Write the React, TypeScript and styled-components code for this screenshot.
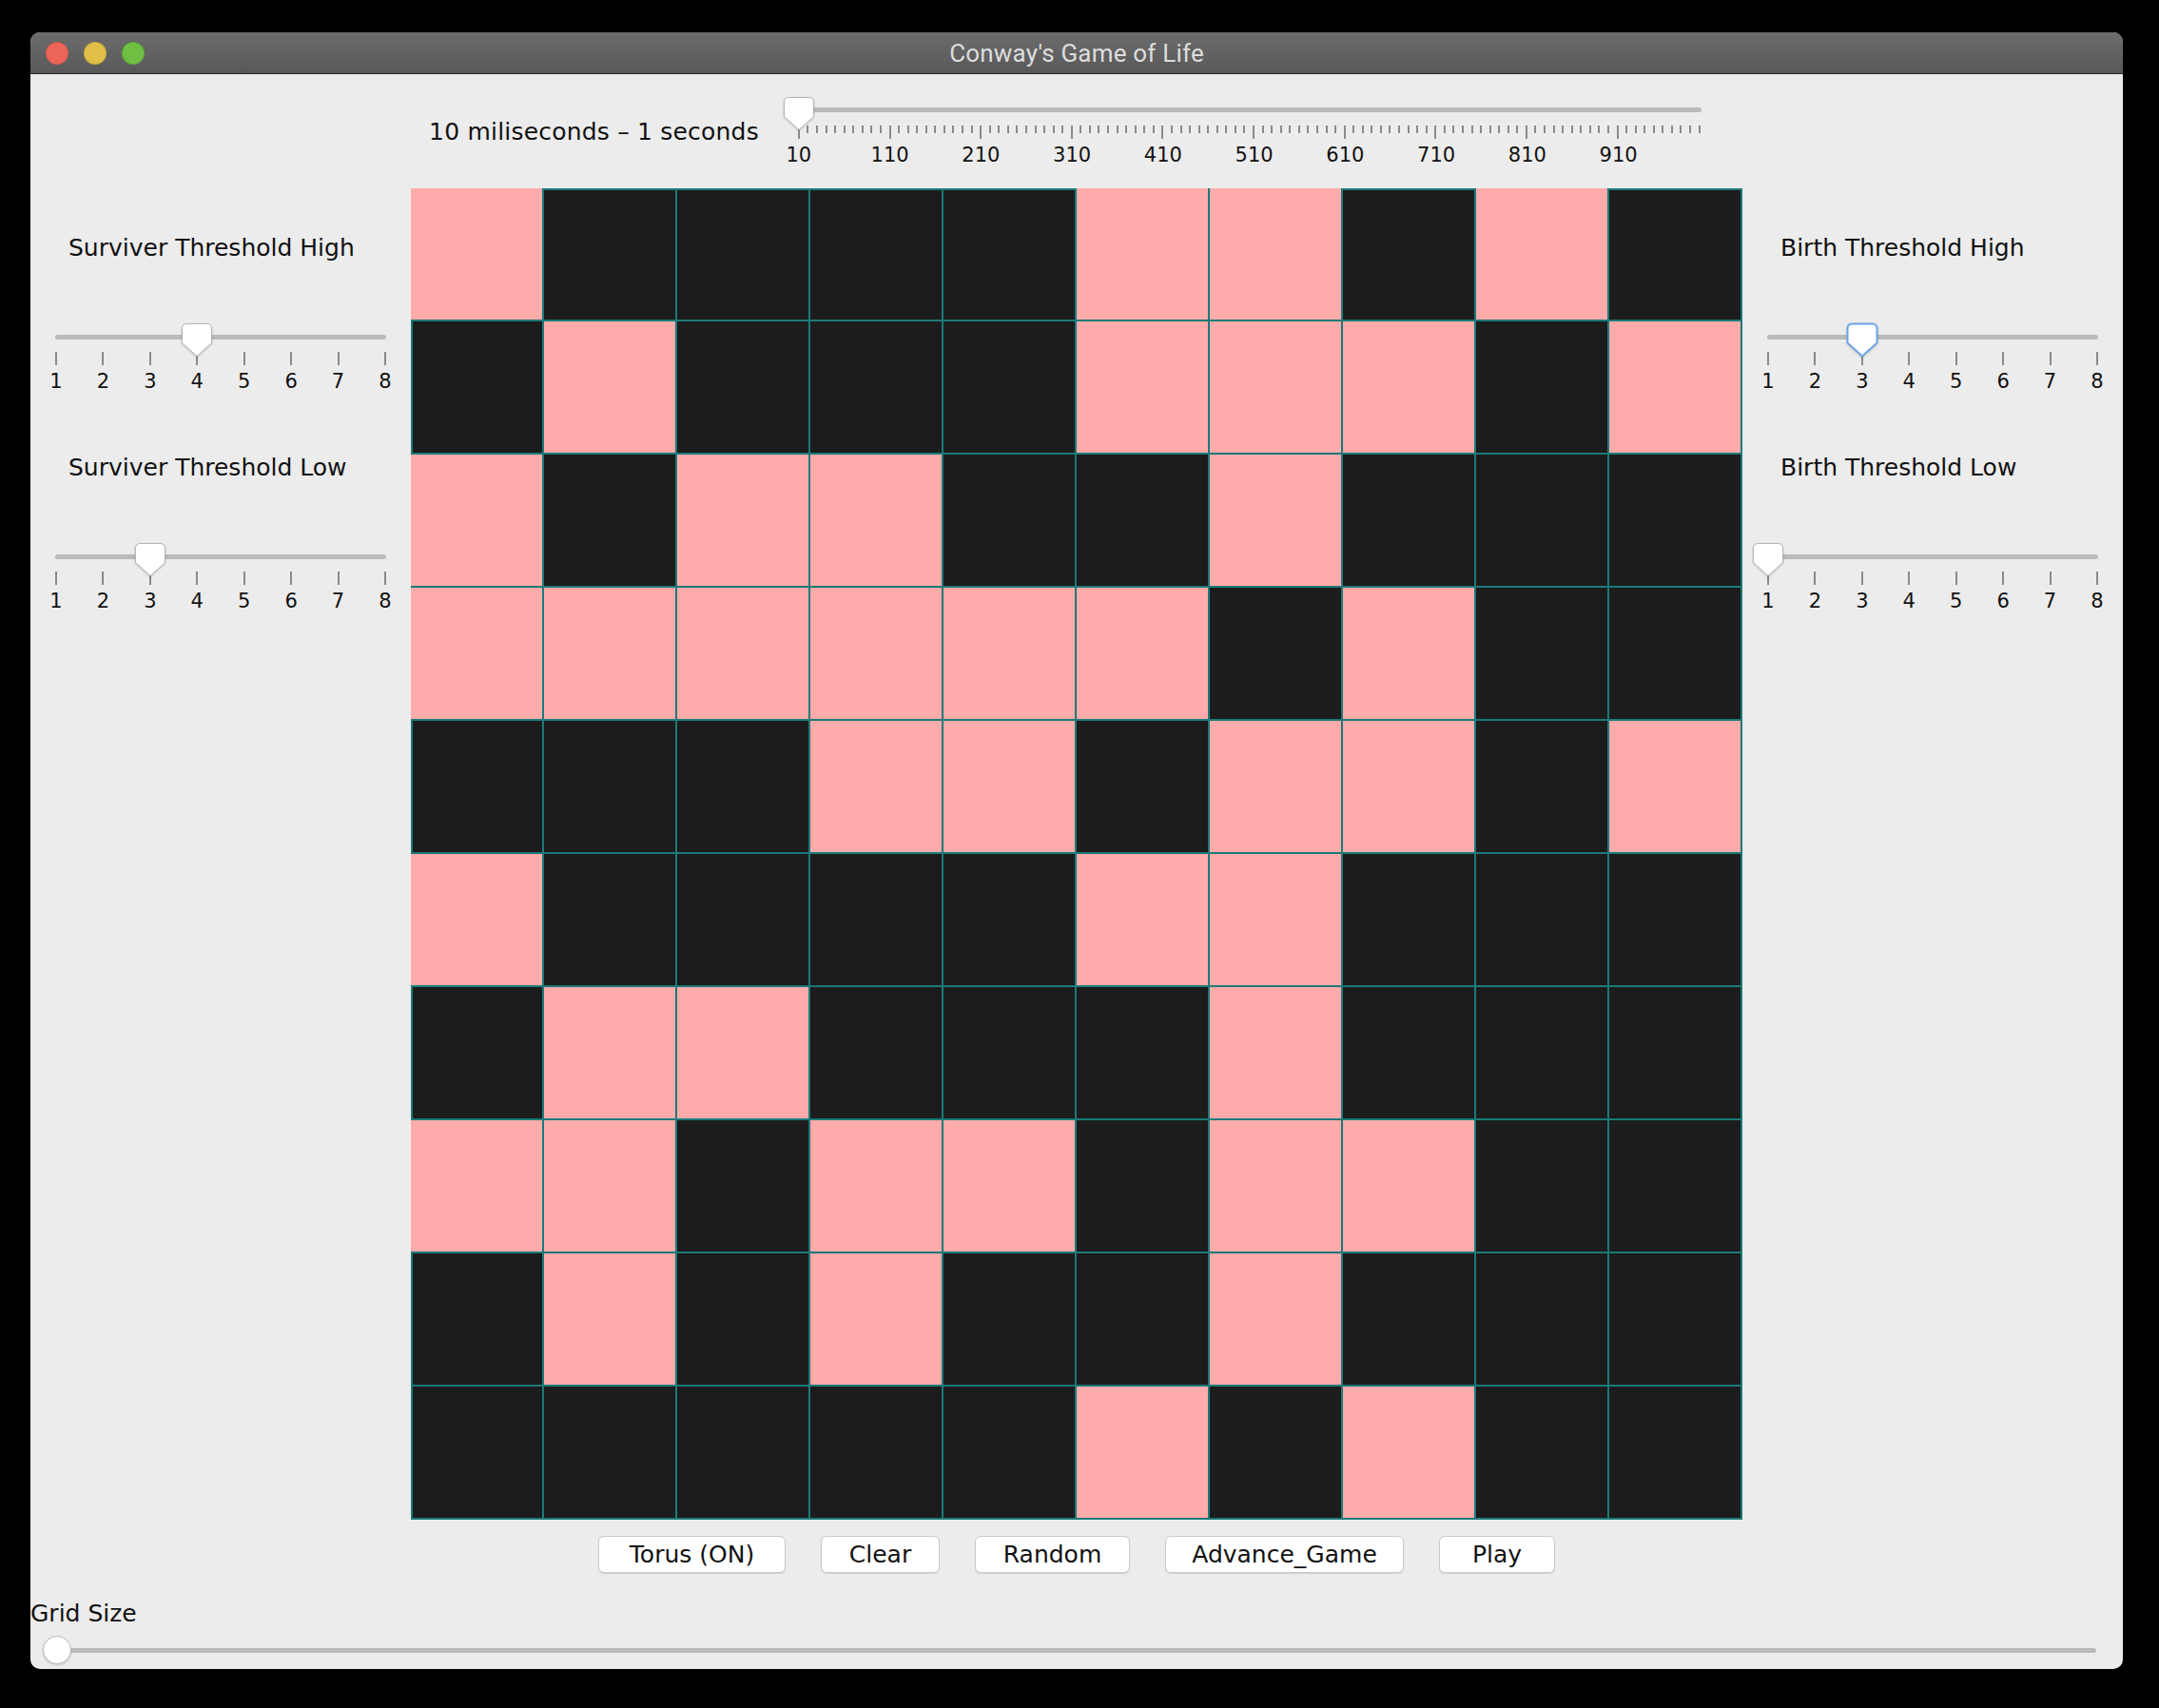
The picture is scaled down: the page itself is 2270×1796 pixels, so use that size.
import React from "react";
import styled, { createGlobalStyle } from "styled-components";

const GlobalStyle = createGlobalStyle`
  html, body { margin: 0; padding: 0; background: #000; }
  body {
    width: 2270px;
    height: 1796px;
    overflow: hidden;
    font-family: "DejaVu Sans", "Liberation Sans", sans-serif;
    color: #111;
  }
`;

const TEAL = "#1b7a78";

const Screen = styled.div`
  padding: 34px 0 0 32px;
`;

const Window = styled.div`
  width: 2200px;
  height: 1721px;
  background: #ececec;
  border-radius: 10px;
  overflow: hidden;
  display: flex;
  flex-direction: column;
`;

const TitleBar = styled.div`
  height: 43px;
  flex: none;
  border-bottom: 1px solid #2b2b2b;
  background: linear-gradient(#6d6d6d, #585858);
  display: grid;
  grid-template-columns: 1fr auto 1fr;
  align-items: center;
  padding: 0 16px;
`;

const Lights = styled.div`
  display: flex;
  gap: 16px;
`;

const Light = styled.span<{ $color: string }>`
  width: 24px;
  height: 24px;
  border-radius: 50%;
  background: ${(p) => p.$color};
  box-shadow: inset 0 0 0 1px rgba(0, 0, 0, 0.12);
`;

const Title = styled.div`
  font-family: Roboto, "Liberation Sans", sans-serif;
  font-size: 26px;
  color: #dddddd;
  letter-spacing: 0.2px;
`;

const Content = styled.div`
  flex: 1;
  display: flex;
  flex-direction: column;
`;

const TopBar = styled.div`
  height: 120px;
  display: flex;
  justify-content: center;
  align-items: center;
  gap: 17px;
`;

const TextLabel = styled.div`
  font-size: 25px;
  line-height: 30px;
  white-space: nowrap;
`;

const SpeedLabel = styled(TextLabel)`
  letter-spacing: 0.2px;
  margin-top: 2px;
`;

const SpeedWrap = styled.div`
  padding: 0 24px;
`;

const Middle = styled.div`
  display: flex;
`;

const SidePanel = styled.div`
  width: 400px;
  box-sizing: border-box;
  padding: 48px 26px 0;
  display: flex;
  flex-direction: column;
`;

const PanelLabel = styled(TextLabel)<{ $first?: boolean }>`
  margin: ${(p) => (p.$first ? "0" : "64px")} 0 64px 14px;
`;

const SliderBlock = styled.div<{ $width: number }>`
  width: ${(p) => p.$width}px;
  display: flex;
  flex-direction: column;
`;

const TrackArea = styled.div`
  position: relative;
  height: 28px;
  display: flex;
  align-items: center;
`;

const Track = styled.div`
  flex: 1;
  height: 5px;
  border-radius: 3px;
  background: #bababa;
`;

const ThumbSvg = styled.svg`
  position: absolute;
  top: 0;
  width: 32px;
  height: 35px;
  margin-left: -16px;
  overflow: visible;
  filter: drop-shadow(0 1px 1px rgba(0, 0, 0, 0.18));
`;

const TickRow = styled.div`
  margin-top: 2px;
  height: 14px;
  display: flex;
  justify-content: space-between;
  align-items: flex-start;
`;

const Tick = styled.span<{ $major: boolean }>`
  width: 2px;
  height: ${(p) => (p.$major ? 14 : 8)}px;
  background: #8a8a8a;
`;

const LabelRow = styled.div<{ $spread: boolean; $offset: number }>`
  margin-top: 5px;
  margin-left: ${(p) => -p.$offset}px;
  margin-right: ${(p) => (p.$spread ? -p.$offset : 0)}px;
  display: flex;
  justify-content: ${(p) => (p.$spread ? "space-between" : "flex-start")};
`;

const TickLabel = styled.span<{ $w: number }>`
  width: ${(p) => p.$w}px;
  flex: none;
  text-align: center;
  font-size: 21px;
  line-height: 24px;
`;

const Board = styled.div`
  width: 1400px;
  height: 1400px;
  flex: none;
  display: grid;
  grid-template-columns: repeat(10, 140px);
  grid-auto-rows: 140px;
`;

const Cell = styled.div<{ $dark: boolean; $left: boolean; $top: boolean }>`
  box-sizing: border-box;
  background: ${(p) => (p.$dark ? "#1c1c1c" : "#ffabab")};
  border-right: 2px solid ${TEAL};
  border-bottom: 2px solid ${TEAL};
  border-left: ${(p) => (p.$dark && p.$left ? `2px solid ${TEAL}` : "none")};
  border-top: ${(p) => (p.$dark && p.$top ? `2px solid ${TEAL}` : "none")};
`;

const ButtonRow = styled.div`
  margin-top: 17px;
  display: flex;
  justify-content: center;
  gap: 37px;
`;

const Button = styled.button<{ $w: number }>`
  width: ${(p) => p.$w}px;
  height: 39px;
  padding: 0;
  background: #ffffff;
  border: 1px solid #c9c9c9;
  border-radius: 6px;
  box-shadow: 0 1px 1px rgba(0, 0, 0, 0.12);
  font-family: "DejaVu Sans", sans-serif;
  font-size: 25px;
  color: #111;
`;

const GridSizeLabel = styled(TextLabel)`
  margin-top: 28px;
`;

const PlainSlider = styled.div`
  margin: 8px 28px 0;
  height: 30px;
  position: relative;
  display: flex;
  align-items: center;
`;

const RoundThumb = styled.span`
  position: absolute;
  top: 0;
  left: -15px;
  width: 30px;
  height: 30px;
  box-sizing: border-box;
  border-radius: 50%;
  background: #fff;
  border: 1px solid #bdbdbd;
  box-shadow: 0 1px 2px rgba(0, 0, 0, 0.18);
`;

const Thumb: React.FC<{ frac: number; focused?: boolean }> = ({ frac, focused }) => (
  <ThumbSvg
    viewBox="0 0 32 35"
    style={{ left: `calc(${frac} * (100% - 2px) + 1px)` }}
  >
    <path
      d="M5 0.5H27A4.5 4.5 0 0 1 31.5 5V20.5L16 34.5L0.5 20.5V5A4.5 4.5 0 0 1 5 0.5Z"
      fill="#fff"
      stroke={focused ? "#6fa5e8" : "#b5b5b5"}
      strokeWidth={focused ? 2 : 1}
    />
  </ThumbSvg>
);

const ThresholdSlider: React.FC<{ value: number; focused?: boolean }> = ({ value, focused }) => {
  const nums = [1, 2, 3, 4, 5, 6, 7, 8];
  return (
    <SliderBlock $width={348}>
      <TrackArea>
        <Track />
        <Thumb frac={(value - 1) / 7} focused={focused} />
      </TrackArea>
      <TickRow>
        {nums.map((n) => (
          <Tick key={n} $major />
        ))}
      </TickRow>
      <LabelRow $spread $offset={14}>
        {nums.map((n) => (
          <TickLabel key={n} $w={30}>
            {n}
          </TickLabel>
        ))}
      </LabelRow>
    </SliderBlock>
  );
};

const SpeedSlider: React.FC = () => {
  const width = 950;
  const step = ((width - 2) / 99) * 10;
  const ticks = Array.from({ length: 100 }, (_, i) => i);
  const labels = Array.from({ length: 10 }, (_, i) => 10 + i * 100);
  return (
    <SliderBlock $width={width}>
      <TrackArea>
        <Track />
        <Thumb frac={0} />
      </TrackArea>
      <TickRow>
        {ticks.map((i) => (
          <Tick key={i} $major={i % 10 === 0} />
        ))}
      </TickRow>
      <LabelRow $spread={false} $offset={step / 2 - 1}>
        {labels.map((l) => (
          <TickLabel key={l} $w={step}>
            {l}
          </TickLabel>
        ))}
      </LabelRow>
    </SliderBlock>
  );
};

const PATTERN = [
  "PDDDDPPDPD",
  "DPDDDPPPDP",
  "PDPPDDPDDD",
  "PPPPPPDPDD",
  "DDDPPDPPDP",
  "PDDDDPPDDD",
  "DPPDDDPDDD",
  "PPDPPDPPDD",
  "DPDPDDPDDD",
  "DDDDDPDPDD",
];

const BUTTONS: [string, number][] = [
  ["Torus (ON)", 197],
  ["Clear", 125],
  ["Random", 163],
  ["Advance_Game", 251],
  ["Play", 122],
];

export default function App() {
  return (
    <>
      <GlobalStyle />
      <Screen>
        <Window>
          <TitleBar>
            <Lights>
              <Light $color="#ec6559" />
              <Light $color="#e0bf48" />
              <Light $color="#6fbf43" />
            </Lights>
            <Title>Conway's Game of Life</Title>
            <span />
          </TitleBar>
          <Content>
            <TopBar>
              <SpeedLabel>10 miliseconds – 1 seconds</SpeedLabel>
              <SpeedWrap>
                <SpeedSlider />
              </SpeedWrap>
            </TopBar>
            <Middle>
              <SidePanel>
                <PanelLabel $first>Surviver Threshold High</PanelLabel>
                <ThresholdSlider value={4} />
                <PanelLabel>Surviver Threshold Low</PanelLabel>
                <ThresholdSlider value={3} />
              </SidePanel>
              <Board>
                {PATTERN.flatMap((row, r) =>
                  row.split("").map((c, col) => (
                    <Cell
                      key={`${r}-${col}`}
                      $dark={c === "D"}
                      $left={col === 0}
                      $top={r === 0}
                    />
                  ))
                )}
              </Board>
              <SidePanel>
                <PanelLabel $first>Birth Threshold High</PanelLabel>
                <ThresholdSlider value={3} focused />
                <PanelLabel>Birth Threshold Low</PanelLabel>
                <ThresholdSlider value={1} />
              </SidePanel>
            </Middle>
            <ButtonRow>
              {BUTTONS.map(([t, w]) => (
                <Button key={t} $w={w}>
                  {t}
                </Button>
              ))}
            </ButtonRow>
            <GridSizeLabel>Grid Size</GridSizeLabel>
            <PlainSlider>
              <Track />
              <RoundThumb />
            </PlainSlider>
          </Content>
        </Window>
      </Screen>
    </>
  );
}
